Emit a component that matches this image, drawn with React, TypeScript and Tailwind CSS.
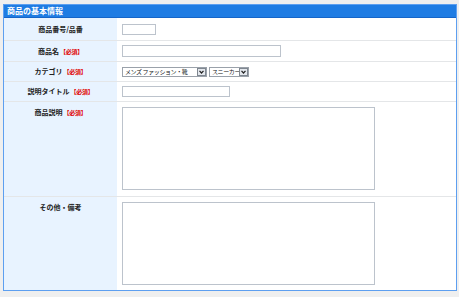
import React from "react";

const font = { fontFamily: '"Noto Sans CJK JP", "Noto Sans", sans-serif' };

function Label({ text, req }: { text: string; req?: boolean }) {
  return (
    <div className="text-[7px] leading-[9px] font-bold text-[#222] text-center whitespace-nowrap">
      {text}
      {req && <span className="text-[#e00000] text-[6px] tracking-[-0.3px] ml-[1px]">【必須】</span>}
    </div>
  );
}

function Select({ text, w }: { text: string; w: string }) {
  return (
    <div className={`flex items-center h-[10px] border border-[#9aa1aa] bg-white ${w}`}>
      <div className="flex-1 min-w-0 text-[6px] leading-[8px] tracking-[-0.4px] text-[#111] pl-[2px] whitespace-nowrap overflow-hidden">
        {text}
      </div>
      <div className="w-[9px] h-[8px] shrink-0 border border-[#7f8790] bg-[#e4e8ee] flex items-center justify-center">
        <svg width="5" height="4" viewBox="0 0 5 4">
          <path d="M0.5 0.8 L2.5 3 L4.5 0.8" stroke="#222" strokeWidth="1.2" fill="none" />
        </svg>
      </div>
    </div>
  );
}

function Row({
  label,
  req,
  h,
  tall,
  children,
  last,
}: {
  label: string;
  req?: boolean;
  h: string;
  tall?: boolean;
  children: React.ReactNode;
  last?: boolean;
}) {
  return (
    <div className={`flex ${h} ${last ? "" : "border-b border-[#e4e6e8]"}`}>
      <div
        className={`w-[113px] bg-[#e8f3ff] flex justify-center ${tall ? "items-start pt-[6px]" : "items-center"}`}
      >
        <Label text={label} req={req} />
      </div>
      <div className={`flex-1 pl-[5px] flex ${tall ? "items-start pt-[5px]" : "items-center"}`}>{children}</div>
    </div>
  );
}

export default function App() {
  return (
    <div className="w-[459px] h-[297px] bg-[#efefef] pt-[4px] pl-[3px]" style={font}>
      <div className="w-[454px] h-[287px] border border-[#5d9ff0] bg-white flex flex-col">
        <div className="h-[13px] bg-[#1f7ce3] border-b border-[#1565c8] text-white text-[8px] leading-[12px] font-bold pl-[3px]">
          商品の基本情報
        </div>
        <Row label="商品番号/品番" h="h-[23px]">
          <div className="w-[34px] h-[11px] border border-[#bcc3cc] bg-white" />
        </Row>
        <Row label="商品名" req h="h-[21px]">
          <div className="w-[159px] h-[12px] border border-[#bcc3cc] bg-white" />
        </Row>
        <Row label="カテゴリ" req h="h-[20px]">
          <div className="flex items-center gap-[2px]">
            <Select text="メンズ ファッション・靴" w="w-[85px]" />
            <Select text="スニーカー" w="w-[40px]" />
          </div>
        </Row>
        <Row label="説明タイトル" req h="h-[20px]">
          <div className="w-[108px] h-[11px] border border-[#bcc3cc] bg-white" />
        </Row>
        <Row label="商品説明" req h="h-[95px]" tall>
          <div className="w-[253px] h-[83px] border border-[#bcc3cc] bg-white" />
        </Row>
        <Row label="その他・備考" h="flex-1" tall last>
          <div className="w-[253px] h-[83px] border border-[#bcc3cc] bg-white" />
        </Row>
      </div>
    </div>
  );
}
